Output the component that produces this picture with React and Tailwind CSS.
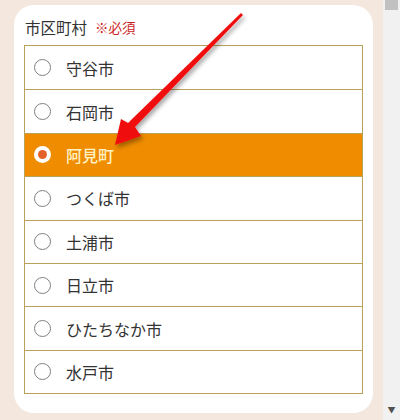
const CITIES = ['守谷市', '石岡市', '阿見町', 'つくば市', '土浦市', '日立市', 'ひたちなか市', '水戸市'];

export default function App() {
  const selected = '阿見町';
  return (
    <div
      className="relative flex h-[420px] w-[400px] overflow-hidden bg-[#f4e7de]"
      style={{ fontFamily: '"Noto Sans CJK JP", "Noto Sans", sans-serif' }}
    >
      <div className="flex-1 pl-[14px] pt-[5px]">
        <div className="h-[408px] w-[359px] rounded-[20px] bg-white px-[10px] pt-[11px]">
          <div className="flex items-center gap-[8px] pb-[6px] pl-[1px] leading-[23px]">
            <span className="text-[15.5px] text-[#333]">市区町村</span>
            <span className="text-[13.5px] text-[#cc1f1f]">※必須</span>
          </div>
          <div className="border border-[#b9a15a]">
            {CITIES.map((c, i) => {
              const on = c === selected;
              return (
                <div
                  key={c}
                  className={`flex h-[43.4px] items-center gap-[15px] pl-[9px] ${i > 0 ? 'border-t border-[#b9a15a]' : ''} ${on ? 'bg-[#ef8c00]' : 'bg-white'}`}
                >
                  {on ? (
                    <span className="flex h-[17px] w-[17px] items-center justify-center rounded-full bg-white">
                      <span className="h-[9px] w-[9px] rounded-full bg-[#e2622a]" />
                    </span>
                  ) : (
                    <span className="h-[17px] w-[17px] rounded-full border border-[#808080] bg-white" />
                  )}
                  <span className={`text-[16px] ${on ? 'font-medium text-[#fff2c4]' : 'text-[#333]'}`}>{c}</span>
                </div>
              );
            })}
          </div>
        </div>
      </div>
      <div className="flex w-[17px] flex-col justify-between bg-[#f1f1f1]">
        <div className="mx-[2px] h-[10px] bg-[#c1c1c1]" />
        <div className="mb-[6px] flex justify-center text-[8px] leading-none text-[#505050]">▼</div>
      </div>
      <svg className="pointer-events-none absolute left-0 top-0" width="400" height="420">
        <defs>
          <filter id="sh" x="-20%" y="-20%" width="140%" height="140%">
            <feDropShadow dx="2" dy="3" stdDeviation="2" floodColor="#000" floodOpacity="0.35" />
          </filter>
        </defs>
        <polygon
          filter="url(#sh)"
          fill="#f01010"
          points="241,13 243,15 135,127 141,136 115,145 121,119 128,123"
        />
      </svg>
    </div>
  );
}
